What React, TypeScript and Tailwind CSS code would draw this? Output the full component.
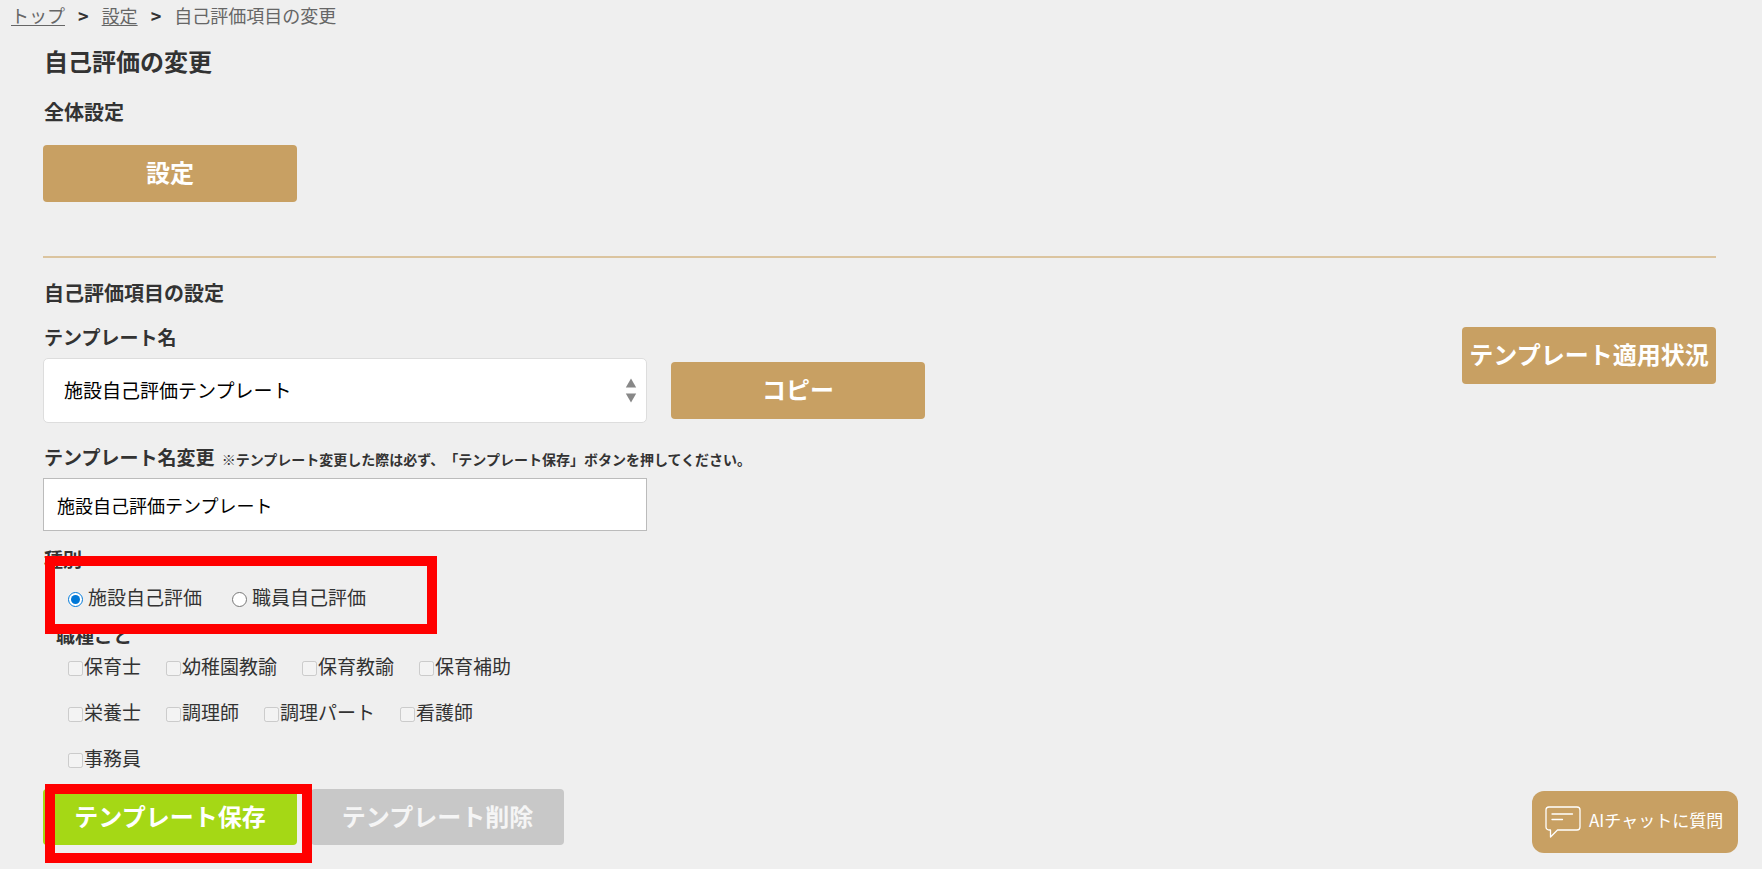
import { useState } from "react";
import type { ReactNode } from "react";

const templates = ["施設自己評価テンプレート", "職員自己評価テンプレート"];

const kinds = [
  { value: "facility", label: "施設自己評価" },
  { value: "staff", label: "職員自己評価" },
];

const jobs = [
  "保育士",
  "幼稚園教諭",
  "保育教諭",
  "保育補助",
  "栄養士",
  "調理師",
  "調理パート",
  "看護師",
  "事務員",
];

function GoldButton({ children }: { children: ReactNode }) {
  return (
    <button
      type="button"
      className="h-[57px] w-[254px] shrink-0 rounded bg-[#c8a063] pb-1 text-2xl font-bold whitespace-nowrap text-white"
    >
      {children}
    </button>
  );
}

function Breadcrumb() {
  return (
    <nav className="flex h-[30px] items-center gap-[13px] px-[11px] text-lg leading-7 text-[#666]">
      <a href="#top" className="underline underline-offset-2">
        トップ
      </a>
      <span className="font-bold text-[#333]">&gt;</span>
      <a href="#settings" className="underline underline-offset-2">
        設定
      </a>
      <span className="font-bold text-[#333]">&gt;</span>
      <span>自己評価項目の変更</span>
    </nav>
  );
}

function SelectArrows() {
  return (
    <svg
      className="pointer-events-none absolute top-5 right-[10px]"
      width={12}
      height={26}
      viewBox="0 0 12 26"
      fill="#888"
    >
      <path d="M6 0.5L11.2 9.5H0.8z" />
      <path d="M6 24.5L11.2 15.5H0.8z" />
    </svg>
  );
}

function ChatButton() {
  return (
    <button
      type="button"
      className="fixed right-6 bottom-4 flex h-[62px] w-[206px] items-center gap-2 rounded-xl bg-[#c8a063] pl-[13px] text-[17px] whitespace-nowrap text-white"
    >
      <svg
        width={36}
        height={32}
        viewBox="0 0 36 32"
        fill="none"
        stroke="currentColor"
        strokeWidth="1.3"
        strokeLinecap="round"
        strokeLinejoin="round"
      >
        <path d="M4 1h28a3 3 0 0 1 3 3v17a3 3 0 0 1 -3 3h-19.500l-7 7v-7h-1.500a3 3 0 0 1 -3 -3v-17a3 3 0 0 1 3 -3z" />
        <path d="M7 8h20.500M7 13.500h10.500" />
      </svg>
      <span className="pb-1">AIチャットに質問</span>
    </button>
  );
}

function App() {
  const [template, setTemplate] = useState(templates[0]);
  const [name, setName] = useState(templates[0]);
  const [kind, setKind] = useState("facility");

  return (
    <div className="min-h-screen bg-[#efefef] font-['Noto_Sans_CJK_JP','Noto_Sans',sans-serif] text-[#333]">
      <Breadcrumb />
      <main className="pt-[13px] pr-[46px] pb-6 pl-[43px]">
        <h1 className="pl-px text-2xl leading-9 font-bold">自己評価の変更</h1>
        <h2 className="mt-[17px] pl-px text-xl leading-8 font-bold">全体設定</h2>
        <div className="mt-[17px]">
          <GoldButton>設定</GoldButton>
        </div>

        <hr className="mt-[54px] border-t-2 border-[#dbc49f]" />

        <h2 className="mt-[19px] pl-px text-xl leading-8 font-bold">自己評価項目の設定</h2>

        <div className="mt-[14px] flex items-start justify-between">
          <div>
            <label htmlFor="template" className="block pl-px text-[19px] leading-7 font-bold">
              テンプレート名
            </label>
            <div className="mt-[7px] flex items-center gap-6">
              <div className="relative w-[604px]">
                <select
                  id="template"
                  value={template}
                  onChange={(e) => setTemplate(e.target.value)}
                  className="block h-[65px] w-full appearance-none rounded-[5px] border border-[#ddd] bg-white px-5 text-[19px] text-black"
                >
                  {templates.map((t) => (
                    <option key={t}>{t}</option>
                  ))}
                </select>
                <SelectArrows />
              </div>
              <GoldButton>コピー</GoldButton>
            </div>
          </div>
          <div className="mt-1">
            <GoldButton>テンプレート適用状況</GoldButton>
          </div>
        </div>

        <label htmlFor="name" className="mt-5 block pl-px text-[19px] leading-7 font-bold">
          テンプレート名変更{" "}
          <span className="ml-[3px] text-sm [text-spacing-trim:space-all]">
            ※テンプレート変更した際は必ず、「テンプレート保存」ボタンを押してください。
          </span>
        </label>
        <input
          id="name"
          type="text"
          value={name}
          onChange={(e) => setName(e.target.value)}
          className="mt-[7px] block h-[53px] w-[604px] border border-[#bbb] bg-white px-[13px] text-lg text-black"
        />

        <fieldset className="mt-[14px]">
          <legend className="pl-px text-[19px] leading-7 font-bold">種別</legend>
          <div className="relative mt-[10px] flex gap-[30px] pl-[25px]">
            {kinds.map((k) => (
              <label key={k.value} className="flex items-center gap-[5px] text-[19px] leading-7">
                <input
                  type="radio"
                  name="kind"
                  checked={kind === k.value}
                  onChange={() => setKind(k.value)}
                  className="mt-1 size-[15px] accent-[#0078d7]"
                />
                {k.label}
              </label>
            ))}
            <div className="pointer-events-none absolute -top-[27px] left-[2px] h-[78px] w-[392px] border-10 border-[#f00]" />
          </div>
        </fieldset>

        {/* job types can be picked only for the staff evaluation */}
        <fieldset className="mt-[10px]" disabled={kind === "facility"}>
          <legend className="pl-[13px] text-[19px] leading-7 font-bold">職種ごと</legend>
          <div className="mt-[3px] flex max-w-[500px] flex-wrap gap-x-[25px] gap-y-[18px] pl-[25px]">
            {jobs.map((job) => (
              <label key={job} className="flex items-center gap-px text-[19px] leading-7">
                <input type="checkbox" className="mt-1 size-[15px]" />
                {job}
              </label>
            ))}
          </div>
        </fieldset>

        <div className="mt-[17px] flex gap-[14px]">
          <div className="relative">
            <button
              type="button"
              className="block h-14 w-[254px] rounded bg-[#a5d815] pb-[3px] text-2xl font-bold text-white"
            >
              テンプレート保存
            </button>
            <div className="pointer-events-none absolute -top-[5px] left-[2px] h-[79px] w-[267px] border-10 border-[#f00]" />
          </div>
          <button
            type="button"
            disabled
            className="h-14 w-[253px] rounded bg-[#c8c8c8] pb-[3px] text-2xl font-bold text-[#f5f5f5]"
          >
            テンプレート削除
          </button>
        </div>
      </main>
      <ChatButton />
    </div>
  );
}

export default App;
